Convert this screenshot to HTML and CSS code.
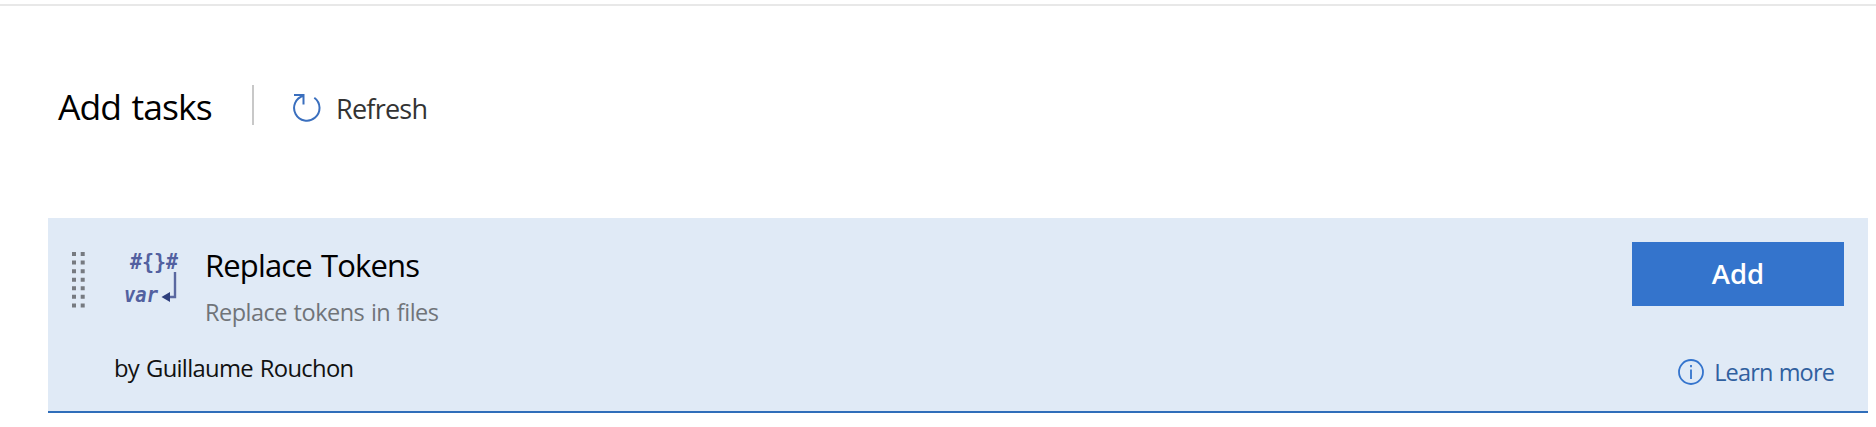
FILE: index.html
```
<!DOCTYPE html>
<html lang="en">
<head>
<meta charset="utf-8">
<title>Add tasks</title>
<link rel="stylesheet" href="styles.css">
</head>
<body>
<main class="panel">
  <header class="toolbar">
    <h1 class="title">Add tasks</h1>
    <span class="divider"></span>
    <button class="refresh">
      <svg class="refresh-icon" width="30" height="30" viewBox="0 0 30 30" fill="none" stroke="#3a6fbe" stroke-width="2">
        <path d="M2 2H11.500V11.500M11.500 2.700A12.700 12.700 0 1 0 22.300 4.700"/>
      </svg>
      <span class="refresh-label">Refresh</span>
    </button>
  </header>
  <section class="card">
    <svg class="grip" width="13" height="56" viewBox="0 0 13 56">
      <path d="M2 0V56M10.7 0V56" stroke="#767a80" stroke-width="4" stroke-dasharray="4 4.57"/>
    </svg>
    <div class="main">
      <div class="summary">
        <svg class="logo" width="64" height="66" viewBox="0 -6 64 66">
          <g class="logo-text">
            <text x="15" y="16.500" textLength="48" lengthAdjust="spacingAndGlyphs">#{}#</text>
            <text class="logo-var" x="9" y="50" textLength="34" lengthAdjust="spacingAndGlyphs">var</text>
          </g>
          <path d="M60 20V45H53" fill="none" stroke="#5a68a0" stroke-width="2.4"/>
          <path d="M46.500 45L55 40V50Z" fill="#2e3f7d"/>
        </svg>
        <div class="texts">
          <h2 class="name">Replace Tokens</h2>
          <p class="description">Replace tokens in files</p>
        </div>
      </div>
      <p class="author">by Guillaume Rouchon</p>
    </div>
    <div class="actions">
      <button class="add">Add</button>
      <a class="learn">
        <svg width="26" height="26" viewBox="0 0 26 26" fill="none" stroke="#3474cd" stroke-width="1.8">
          <circle cx="13" cy="13" r="12"/>
          <path d="M13 10.500V20M13 6V8.200"/>
        </svg>
        <span class="learn-label">Learn more</span>
      </a>
    </div>
  </section>
</main>
</body>
</html>
```
FILE: styles.css
```
* { box-sizing: border-box; margin: 0; padding: 0; }
body { background: #fff; font-family: "Open Sans", "Noto Sans", sans-serif; color: #000; }
button { border: 0; background: none; font: inherit; color: inherit; }
.panel { margin-top: 4px; height: 423px; border-top: 2px solid #e8e8e8; padding: 79px 8px 0 48px; }
.toolbar { display: flex; height: 40px; padding-left: 10px; }
.title { width: 194px; font-size: 35.5px; line-height: 42px; font-weight: 400; letter-spacing: -0.9px; word-spacing: 2px; white-space: nowrap; }
.divider { width: 2px; height: 40px; background: #c8c8c8; }
.refresh { display: flex; align-items: flex-start; padding: 8px 0 0 38px; color: #333; }
.refresh-icon { flex: none; }
.refresh-label { margin-left: 14px; font-size: 27px; line-height: 32px; letter-spacing: -0.75px; }
.card { display: flex; height: 195px; margin-top: 93px; background: #e0eaf6; border-bottom: 2px solid #2f6eba; }
.grip { flex: none; margin: 34px 0 0 24px; }
.main { flex: 1; padding: 28px 0 0 29px; }
.summary { display: flex; }
.logo { flex: none; margin: 0 0 0 1px; }
.logo-text { font: 700 20.5px "DejaVu Sans Mono", monospace; fill: #5260a0; }
.logo-var { font-style: italic; }
.texts { padding-left: 26px; }
.name { font-size: 31px; line-height: 38px; font-weight: 400; letter-spacing: -0.85px; word-spacing: 2px; }
.description { margin-top: 13px; font-size: 23.5px; line-height: 30px; letter-spacing: -0.5px; word-spacing: 1px; color: #707479; }
.author { margin-top: 26px; font-size: 23.8px; line-height: 30px; letter-spacing: -0.7px; word-spacing: 1.5px; color: #111; }
.actions { display: flex; flex-direction: column; align-items: flex-end; padding: 24px 24px 0 0; }
.add { width: 212px; height: 64px; background: #3474cc; color: #fff; font-size: 27.5px; line-height: 64px; font-weight: 600; }
.learn { display: flex; align-items: center; margin: 51px 10px 0 0; }
.learn-label { margin-left: 10px; font-size: 23.5px; line-height: 30px; letter-spacing: -0.85px; word-spacing: 1px; color: #30609f; }
```
